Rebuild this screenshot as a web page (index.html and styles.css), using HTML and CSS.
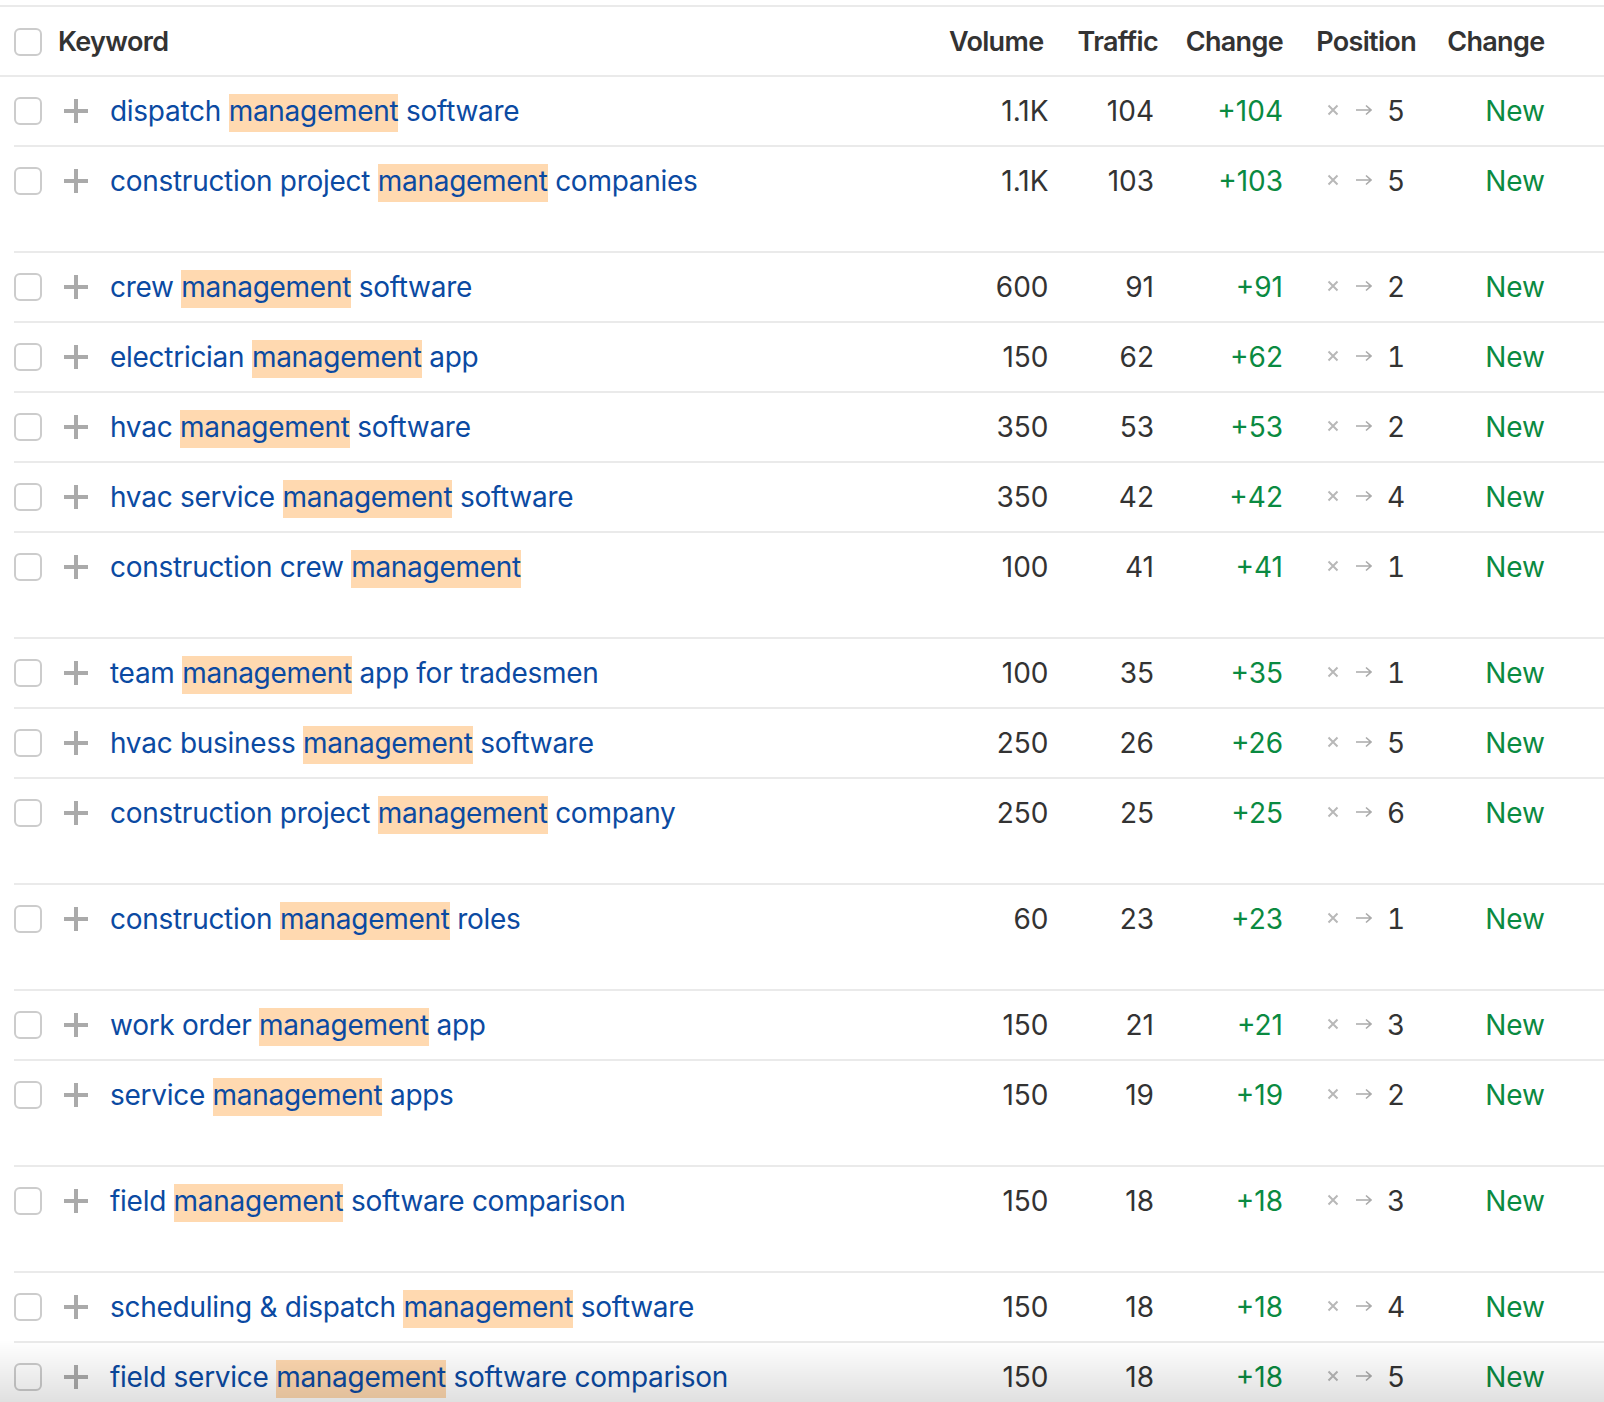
FILE: index.html
```html
<!DOCTYPE html>
<html lang="en">
<head>
    <meta charset="UTF-8">
    <title>Organic keywords</title>
    <link rel="stylesheet" href="styles.css">
</head>
<body>
    <svg class="sprite" width="0" height="0">
        <symbol id="plus" viewBox="0 0 24 24"><path d="M10 0h4v10h10v4H14v10h-4V14H0v-4h10z"/></symbol>
        <symbol id="cross" viewBox="0 0 12 12"><path d="M1.5 1.5l9 9M10.500 1.500l-9 9"/></symbol>
        <symbol id="arrow" viewBox="0 0 16 12"><path d="M0 6h15M10 1.500l5 4.500-5 4.500"/></symbol>
    </svg>

    <div class="table">
        <div class="head">
            <span class="check"></span>
            <span>Keyword</span>
            <span class="num head-volume">Volume</span>
            <span class="num">Traffic</span>
            <span class="num">Change</span>
            <span class="num">Position</span>
            <span class="num">Change</span>
        </div>

        <div class="row">
            <span class="check"></span>
            <svg class="plus"><use href="#plus"/></svg>
            <a class="kw">dispatch <mark>management</mark> software</a>
            <span class="num">1.1K</span>
            <span class="num">104</span>
            <span class="num up">+104</span>
            <span class="pos"><svg class="x"><use href="#cross"/></svg><svg class="to"><use href="#arrow"/></svg><b>5</b></span>
            <span class="num up">New</span>
        </div>
        <div class="row tall">
            <span class="check"></span>
            <svg class="plus"><use href="#plus"/></svg>
            <a class="kw">construction project <mark>management</mark> companies</a>
            <span class="num">1.1K</span>
            <span class="num">103</span>
            <span class="num up">+103</span>
            <span class="pos"><svg class="x"><use href="#cross"/></svg><svg class="to"><use href="#arrow"/></svg><b>5</b></span>
            <span class="num up">New</span>
        </div>
        <div class="row">
            <span class="check"></span>
            <svg class="plus"><use href="#plus"/></svg>
            <a class="kw">crew <mark>management</mark> software</a>
            <span class="num">600</span>
            <span class="num">91</span>
            <span class="num up">+91</span>
            <span class="pos"><svg class="x"><use href="#cross"/></svg><svg class="to"><use href="#arrow"/></svg><b>2</b></span>
            <span class="num up">New</span>
        </div>
        <div class="row">
            <span class="check"></span>
            <svg class="plus"><use href="#plus"/></svg>
            <a class="kw">electrician <mark>management</mark> app</a>
            <span class="num">150</span>
            <span class="num">62</span>
            <span class="num up">+62</span>
            <span class="pos"><svg class="x"><use href="#cross"/></svg><svg class="to"><use href="#arrow"/></svg><b>1</b></span>
            <span class="num up">New</span>
        </div>
        <div class="row">
            <span class="check"></span>
            <svg class="plus"><use href="#plus"/></svg>
            <a class="kw">hvac <mark>management</mark> software</a>
            <span class="num">350</span>
            <span class="num">53</span>
            <span class="num up">+53</span>
            <span class="pos"><svg class="x"><use href="#cross"/></svg><svg class="to"><use href="#arrow"/></svg><b>2</b></span>
            <span class="num up">New</span>
        </div>
        <div class="row">
            <span class="check"></span>
            <svg class="plus"><use href="#plus"/></svg>
            <a class="kw">hvac service <mark>management</mark> software</a>
            <span class="num">350</span>
            <span class="num">42</span>
            <span class="num up">+42</span>
            <span class="pos"><svg class="x"><use href="#cross"/></svg><svg class="to"><use href="#arrow"/></svg><b>4</b></span>
            <span class="num up">New</span>
        </div>
        <div class="row tall">
            <span class="check"></span>
            <svg class="plus"><use href="#plus"/></svg>
            <a class="kw">construction crew <mark>management</mark></a>
            <span class="num">100</span>
            <span class="num">41</span>
            <span class="num up">+41</span>
            <span class="pos"><svg class="x"><use href="#cross"/></svg><svg class="to"><use href="#arrow"/></svg><b>1</b></span>
            <span class="num up">New</span>
        </div>
        <div class="row">
            <span class="check"></span>
            <svg class="plus"><use href="#plus"/></svg>
            <a class="kw">team <mark>management</mark> app for tradesmen</a>
            <span class="num">100</span>
            <span class="num">35</span>
            <span class="num up">+35</span>
            <span class="pos"><svg class="x"><use href="#cross"/></svg><svg class="to"><use href="#arrow"/></svg><b>1</b></span>
            <span class="num up">New</span>
        </div>
        <div class="row">
            <span class="check"></span>
            <svg class="plus"><use href="#plus"/></svg>
            <a class="kw">hvac business <mark>management</mark> software</a>
            <span class="num">250</span>
            <span class="num">26</span>
            <span class="num up">+26</span>
            <span class="pos"><svg class="x"><use href="#cross"/></svg><svg class="to"><use href="#arrow"/></svg><b>5</b></span>
            <span class="num up">New</span>
        </div>
        <div class="row tall">
            <span class="check"></span>
            <svg class="plus"><use href="#plus"/></svg>
            <a class="kw">construction project <mark>management</mark> company</a>
            <span class="num">250</span>
            <span class="num">25</span>
            <span class="num up">+25</span>
            <span class="pos"><svg class="x"><use href="#cross"/></svg><svg class="to"><use href="#arrow"/></svg><b>6</b></span>
            <span class="num up">New</span>
        </div>
        <div class="row tall">
            <span class="check"></span>
            <svg class="plus"><use href="#plus"/></svg>
            <a class="kw">construction <mark>management</mark> roles</a>
            <span class="num">60</span>
            <span class="num">23</span>
            <span class="num up">+23</span>
            <span class="pos"><svg class="x"><use href="#cross"/></svg><svg class="to"><use href="#arrow"/></svg><b>1</b></span>
            <span class="num up">New</span>
        </div>
        <div class="row">
            <span class="check"></span>
            <svg class="plus"><use href="#plus"/></svg>
            <a class="kw">work order <mark>management</mark> app</a>
            <span class="num">150</span>
            <span class="num">21</span>
            <span class="num up">+21</span>
            <span class="pos"><svg class="x"><use href="#cross"/></svg><svg class="to"><use href="#arrow"/></svg><b>3</b></span>
            <span class="num up">New</span>
        </div>
        <div class="row tall">
            <span class="check"></span>
            <svg class="plus"><use href="#plus"/></svg>
            <a class="kw">service <mark>management</mark> apps</a>
            <span class="num">150</span>
            <span class="num">19</span>
            <span class="num up">+19</span>
            <span class="pos"><svg class="x"><use href="#cross"/></svg><svg class="to"><use href="#arrow"/></svg><b>2</b></span>
            <span class="num up">New</span>
        </div>
        <div class="row tall">
            <span class="check"></span>
            <svg class="plus"><use href="#plus"/></svg>
            <a class="kw">field <mark>management</mark> software comparison</a>
            <span class="num">150</span>
            <span class="num">18</span>
            <span class="num up">+18</span>
            <span class="pos"><svg class="x"><use href="#cross"/></svg><svg class="to"><use href="#arrow"/></svg><b>3</b></span>
            <span class="num up">New</span>
        </div>
        <div class="row">
            <span class="check"></span>
            <svg class="plus"><use href="#plus"/></svg>
            <a class="kw">scheduling &amp; dispatch <mark>management</mark> software</a>
            <span class="num">150</span>
            <span class="num">18</span>
            <span class="num up">+18</span>
            <span class="pos"><svg class="x"><use href="#cross"/></svg><svg class="to"><use href="#arrow"/></svg><b>4</b></span>
            <span class="num up">New</span>
        </div>
        <div class="row">
            <span class="check"></span>
            <svg class="plus"><use href="#plus"/></svg>
            <a class="kw">field service <mark>management</mark> software comparison</a>
            <span class="num">150</span>
            <span class="num">18</span>
            <span class="num up">+18</span>
            <span class="pos"><svg class="x"><use href="#cross"/></svg><svg class="to"><use href="#arrow"/></svg><b>5</b></span>
            <span class="num up">New</span>
        </div>
    </div>

    <div class="fade"></div>
</body>
</html>
```

FILE: styles.css
```css
html, body {
    height: 1402px;
    margin: 0;
    overflow: hidden;
    background-color: #fff;
}

body {
    font-family: Inter, "Liberation Sans", sans-serif;
    font-size: 28px;
    line-height: 38px;
    color: #333;
}

.sprite {
    position: absolute;
}

.table {
    padding-top: 5px;
}

.head,
.row {
    display: grid;
    border-top: 2px solid #eaeaea;
}

.head {
    height: 66px;
    padding: 2px 59.500px 0 14px;
    border-bottom: 2px solid #eaeaea;
    grid-template-columns: 44px 1fr 94.500px 114.500px 125px 133px 128.500px;
    align-items: center;
    font-size: 27px;
    font-weight: 600;
    letter-spacing: -0.66px;
}

.head-volume {
    padding-right: 1.500px;
}

.row {
    height: 53px;
    margin-left: 14px;
    padding: 15px 59px 0 0;
    grid-template-columns: 44px 52px 1fr 100px 105.500px 129px 133.500px 128.500px;
}

/* the header draws the full-width line above the first row */
.head + .row {
    border-top: 0;
}

.row.tall {
    height: 89px;
}

.check {
    display: block;
    width: 24px;
    height: 24px;
    border: 2px solid #ccc;
    border-radius: 6px;
    background-color: #fff;
}

.row .check {
    margin-top: 5px;
}

.plus {
    width: 24px;
    height: 24px;
    margin: 7px 0 0 6px;
    fill: #aaa;
}

.kw {
    color: #0b4aa2;
    letter-spacing: -0.28px;
    white-space: nowrap;
}

/* inline box is 34px tall with Inter, bottom padding brings it to 38 */
mark {
    padding-bottom: 4px;
    background-color: #ffd9b0;
    color: inherit;
}

.num {
    text-align: right;
    white-space: nowrap;
}

.up {
    color: #0a8a41;
}

.pos {
    display: flex;
    align-items: center;
    height: 38px;
    padding-left: 44px;
}

.pos b {
    font-weight: 400;
    font-variant-numeric: tabular-nums;
}

.x {
    width: 12px;
    height: 12px;
    margin-right: 17px;
    margin-top: -2px;
    fill: none;
    stroke: #b8b8b8;
    stroke-width: 2;
}

.to {
    width: 16px;
    height: 12px;
    margin-right: 15px;
    margin-top: -2px;
    fill: none;
    stroke: #aaa;
    stroke-width: 1.6;
}

/* bottom fade over the last row */
.fade {
    position: fixed;
    left: 0;
    right: 0;
    bottom: 0;
    height: 62px;
    background: linear-gradient(rgba(0, 0, 0, 0), rgba(0, 0, 0, 0.12));
    pointer-events: none;
}
```
